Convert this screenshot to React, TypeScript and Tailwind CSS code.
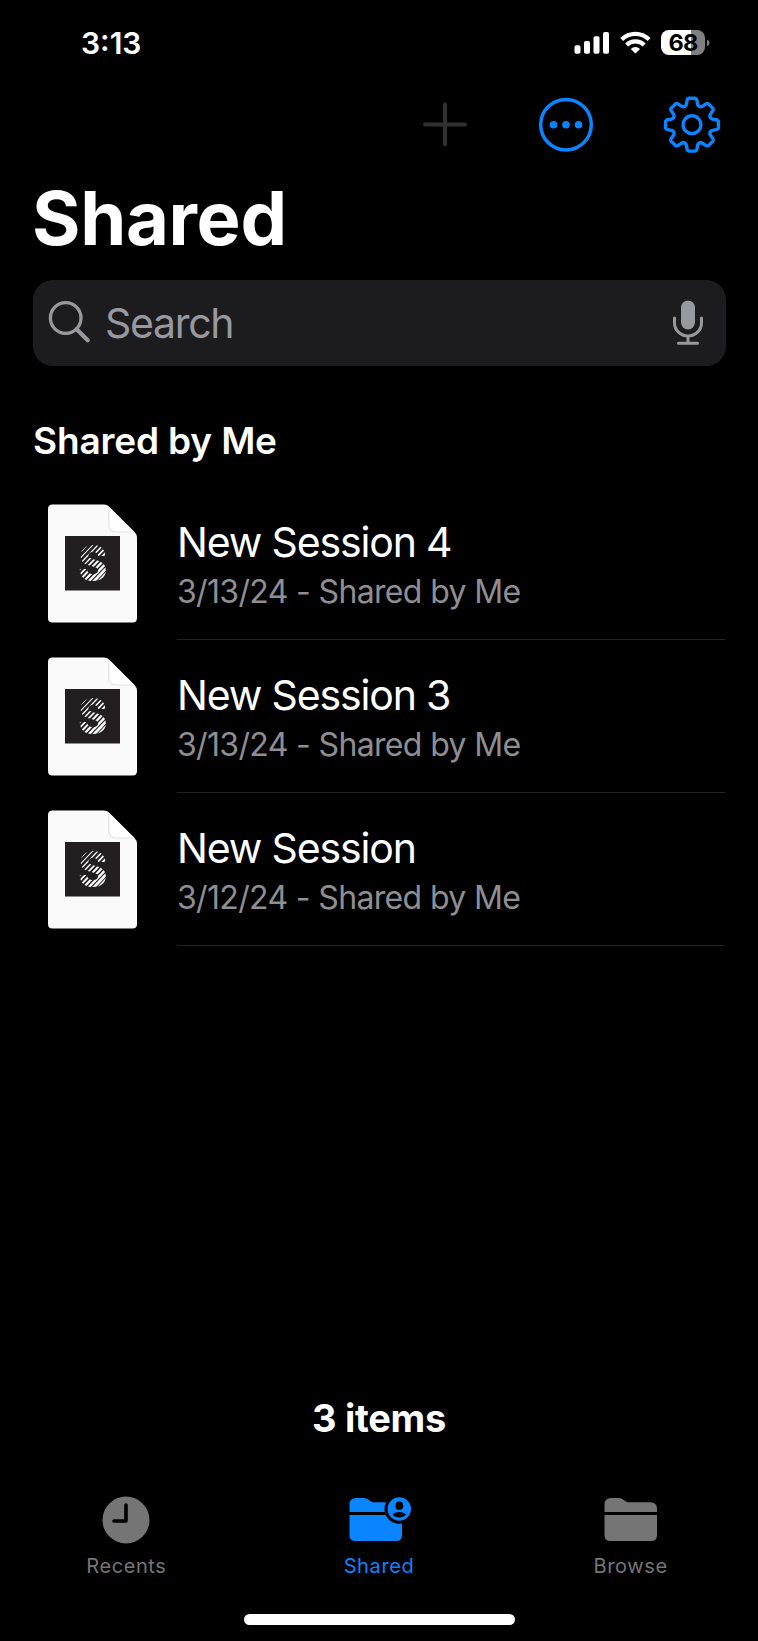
const FILES=[
{title:"New Session 4",meta:"3/13/24 - Shared by Me"},
{title:"New Session 3",meta:"3/13/24 - Shared by Me"},
{title:"New Session",meta:"3/12/24 - Shared by Me"},
];
// one tooth, valley to valley, turned eight times round the hub
const TOOTH=[[-7,-18.4],[-5.9,-19.6],[-4.7,-25.2],[-3.4,-26.4],[3.4,-26.4],[4.7,-25.2],[5.9,-19.6],[7,-18.4]];
const GEAR=Array.from({length:8},(_,i)=>{
const a=(i*Math.PI)/4;
return TOOTH.map(([x,y])=>`${(x*Math.cos(a)-y*Math.sin(a)).toFixed(2)},${(x*Math.sin(a)+y*Math.cos(a)).toFixed(2)}`).join(" ");
}).join(" ");
function StatusBar(){
return(
<div className="h-[85px] flex justify-between items-start pl-[81px] pr-[48px]">
<span className="mt-[26px] text-[30px] leading-[34px] font-semibold">3:13</span>
<div className="flex mt-[30px]">
<svg width="36" height="25" viewBox="0 0 36 25" fill="#fff">
<rect x="0.5" y="15.3" width="6" height="8.5" rx="1.8"/><rect x="10" y="11" width="6" height="12.8" rx="1.8"/>
<rect x="19.5" y="6.3" width="6" height="17.5" rx="1.8"/><rect x="29" y="2" width="6" height="21.8" rx="1.8"/>
</svg>
<svg className="ml-[10px]" width="31" height="25" viewBox="0 0 31 25" fill="none" stroke="#fff" strokeWidth="4.2">
<path d="M1.7 9.4A19.6 19.6 0 0 1 29.1 9.4"/><path d="M6.6 14.9A12.6 12.6 0 0 1 24.2 14.9"/>
<path d="M15.4 23.6L10.8 18.9A6.7 6.7 0 0 1 20 18.9Z" fill="#fff" stroke="none"/>
</svg>
<div className="ml-[10px] w-[44px] h-[25px] rounded-[8px] bg-[linear-gradient(90deg,#fff_68%,#808080_68%)] text-black text-[23.5px] leading-[26px] font-bold text-center tracking-[-0.9px]">68</div>
<svg width="5" height="25" viewBox="0 0 5 25"><path d="M2 9.7C5.4 10.7 5.4 15 2 16Z" fill="#808080"/></svg>
</div></div>
);
}
function Toolbar(){
return(
<div className="h-[79px] flex items-center justify-end gap-[69px] pr-[37px]">
<svg width="46" height="46" viewBox="-23 -22.5 46 46" stroke="#303031" strokeWidth="4" strokeLinecap="round" className="mr-[1px]"><path d="M-20 0H20M0-20V20"/></svg>
<svg width="56" height="56" viewBox="-28 -27.7 56 56" fill="#0a84ff"><circle r="25.3" fill="none" stroke="#0a84ff" strokeWidth="3.5"/><circle cx="-12.5" r="3.8"/><circle r="3.8"/><circle cx="12.5" r="3.8"/></svg>
<svg width="58" height="58" viewBox="-29 -28.7 58 58" fill="none" stroke="#0a84ff" strokeWidth="3.4" strokeLinejoin="round"><polygon points={GEAR}/><circle r="8.9"/></svg>
</div>
);
}
function FileIcon(){
return(
<svg width="91" height="120" viewBox="0 0.5 91 120" className="shrink-0">
<defs><clipPath id="s"><text transform="translate(45.8 77) scale(.9 1)" textAnchor="middle" fontFamily="Inter, sans-serif" fontWeight="800" fontSize="49">S</text></clipPath></defs>
<path d="M5.5 1H57Q60 1 62.3 3.3L87.7 28.7Q90 31 90 34V114.500Q90 119 85.500 119H5.500Q1 119 1 114.500V5.500Q1 1 5.500 1Z" fill="#fafafa"/>
<path d="M61.500 3V21Q61.500 28.500 69 28.500H87.500Z" fill="#fff"/>
<path d="M61.800 3.500V21Q61.800 28.500 69 28.500H86.500" fill="none" stroke="#e2e2e2" strokeWidth="1.200"/>
<rect x="18" y="32.500" width="55" height="54.500" fill="#231f20"/>
<g clipPath="url(#s)" stroke="#fff">
{Array.from({length:16},(_,i)=>(<path key={i} d={`M${4+i*5.1} 80l42-44`} strokeWidth={Math.min(3,0.8+i*0.23)}/>))}
</g>
</svg>
);
}
function Folder(){
return(
<>
<path d="M0 14V6.500Q0 0 6.500 0H14.500Q17 0 19 1.700L21 3.300Q22.300 4.300 24 4.300H46Q52.500 4.300 52.500 10.800V14Z"/>
<path d="M0 17H52.500V37Q52.500 43 46.500 43H6Q0 43 0 37Z"/>
</>
);
}
function TabBar(){
return(
<div className="h-[119px] grid grid-cols-3 text-[20px] leading-[24px] tracking-[0.6px] text-[#757575]">
<div className="flex flex-col items-center">
<svg width="64" height="50" viewBox="-32 -25 64 50"><circle r="23.5" fill="#757575"/><path d="M0-15V1H-12" fill="none" stroke="#000" strokeWidth="3.6" strokeLinecap="round" strokeLinejoin="round"/></svg>
<span className="mt-[9px]">Recents</span>
</div>
<div className="flex flex-col items-center text-[#0a84ff]">
<svg width="64" height="50" viewBox="0 0 64 50" fill="#0a84ff"><g transform="translate(2.500 3)"><Folder/></g>
<circle cx="52.300" cy="14" r="14.800" fill="#000"/><circle cx="52.300" cy="14" r="11.700"/>
<ellipse cx="52.300" cy="10.800" rx="3.900" ry="4.300" fill="#000"/><path d="M45.700 19.800C47.500 16 57.100 16 58.900 19.800C56 23.300 48.600 23.300 45.700 19.800Z" fill="#000"/>
</svg>
<span className="mt-[9px]">Shared</span>
</div>
<div className="flex flex-col items-center pr-[2px]">
<svg width="64" height="50" viewBox="0 0 64 50" fill="#757575"><g transform="translate(5.500 3)"><Folder/></g></svg>
<span className="mt-[9px]">Browse</span>
</div>
</div>
);
}
export default function App(){
return(
<div className="w-[758px] h-[1641px] bg-black text-white font-[Inter,sans-serif] flex flex-col overflow-hidden">
<StatusBar/>
<Toolbar/>
<h1 className="h-[115.5px] pt-[12px] pl-[32px] text-[74px] leading-[84px] font-bold tracking-[-0.3px]">Shared</h1>
<div className="mx-[32.5px] h-[86px] shrink-0 rounded-[20px] bg-[#1c1c1e] flex items-center pl-[14.5px] pr-[21.5px] text-[#98989f]">
<svg width="46" height="46" viewBox="0 0 46 46" fill="none" stroke="#98989f" strokeLinecap="round"><circle cx="18.700" cy="18" r="15.300" strokeWidth="3.300"/><path d="M29.700 29.200L40.700 40.200" strokeWidth="4.300"/></svg>
<span className="ml-[12px] text-[41px] leading-[50px] tracking-[-1.3px]">Search</span>
<svg className="ml-auto" width="32" height="46" viewBox="0 0 32 46" fill="none" stroke="#98989f" strokeWidth="3" strokeLinecap="round"><rect x="9" y="0.500" width="14" height="29" rx="7" fill="#98989f" stroke="none"/><path d="M2.500 18V23A13.500 13 0 0 0 29.500 23V18M16 36V43M6.500 43.200H25.500"/></svg>
</div>
<h2 className="mt-[53.5px] pl-[33px] text-[37px] leading-[44px] font-semibold tracking-[-0.15px]">Shared by Me</h2>
<ul className="mt-[24px] pl-[47px] pr-[33px]">
{FILES.map((f)=>(
<li key={f.title} className="h-[153px] flex">
<div className="pt-[17px]"><FileIcon/></div>
<div className="ml-[39px] flex-1 pt-[30px] border-b border-[#222224]">
<p className="text-[41px] leading-[50px] tracking-[-1.15px]">{f.title}</p>
<p className="mt-[5px] text-[32px] leading-[40px] tracking-[-0.65px] text-[#8e8e93]">{f.meta}</p>
</div>
</li>
))}
</ul>
<p className="mt-auto mb-[55px] text-center text-[38px] leading-[44px] font-bold tracking-[-0.3px]">3 items</p>
<TabBar/>
<div className="mb-[16px] w-[271px] h-[11px] shrink-0 rounded-full bg-white self-center"/>
</div>
);
}
